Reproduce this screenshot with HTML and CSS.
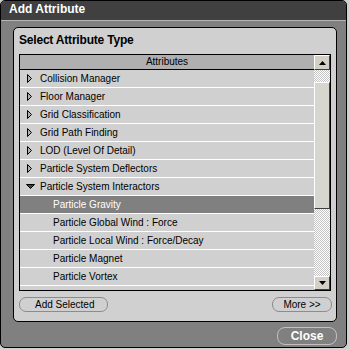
FILE: index.html
```html
<!DOCTYPE html>
<html>
<head>
<meta charset="utf-8">
<link rel="stylesheet" href="styles.css">
</head>
<body>
<div class="window">
  <div class="titlebar">Add Attribute</div>
  <div class="body">
    <div class="panel">
      <div class="heading">Select Attribute Type</div>
      <div class="listbox">
        <div class="listmain">
          <div class="listhead">Attributes</div>
          <div class="rows">
            <div class="row"><svg class="tri" width="6" height="9" viewBox="0 0 6 9"><polygon points="0.5,0.5 4.5,4.5 0.5,8.5" fill="#b0b0b0" stroke="#000"/></svg><span>Collision Manager</span></div>
            <div class="row"><svg class="tri" width="6" height="9" viewBox="0 0 6 9"><polygon points="0.5,0.5 4.5,4.5 0.5,8.5" fill="#b0b0b0" stroke="#000"/></svg><span>Floor Manager</span></div>
            <div class="row"><svg class="tri" width="6" height="9" viewBox="0 0 6 9"><polygon points="0.5,0.5 4.5,4.5 0.5,8.5" fill="#b0b0b0" stroke="#000"/></svg><span>Grid Classification</span></div>
            <div class="row"><svg class="tri" width="6" height="9" viewBox="0 0 6 9"><polygon points="0.5,0.5 4.5,4.5 0.5,8.5" fill="#b0b0b0" stroke="#000"/></svg><span>Grid Path Finding</span></div>
            <div class="row"><svg class="tri" width="6" height="9" viewBox="0 0 6 9"><polygon points="0.5,0.5 4.5,4.5 0.5,8.5" fill="#b0b0b0" stroke="#000"/></svg><span>LOD (Level Of Detail)</span></div>
            <div class="row"><svg class="tri" width="6" height="9" viewBox="0 0 6 9"><polygon points="0.5,0.5 4.5,4.5 0.5,8.5" fill="#b0b0b0" stroke="#000"/></svg><span>Particle System Deflectors</span></div>
            <div class="row open"><svg class="tridown" width="9" height="6" viewBox="0 0 9 6"><polygon points="0.5,0.5 8.5,0.5 4.5,4.5" fill="#404040" stroke="#000"/></svg><span>Particle System Interactors</span></div>
            <div class="row child selected"><span>Particle Gravity</span></div>
            <div class="row child"><span>Particle Global Wind : Force</span></div>
            <div class="row child"><span>Particle Local Wind : Force/Decay</span></div>
            <div class="row child"><span>Particle Magnet</span></div>
            <div class="row child"><span>Particle Vortex</span></div>
          </div>
        </div>
        <div class="scrollbar">
          <div class="sbtn up"><svg width="7" height="4" viewBox="0 0 7 4"><polygon points="3.5,0 7,4 0,4" fill="#000"/></svg></div>
          <div class="track"><div class="thumb"></div></div>
          <div class="sbtn down"><svg width="7" height="4" viewBox="0 0 7 4"><polygon points="0,0 7,0 3.5,4" fill="#000"/></svg></div>
        </div>
      </div>
      <div class="actions">
        <div class="pill add">Add Selected</div>
        <div class="pill more">More &gt;&gt;</div>
      </div>
    </div>
    <div class="footer">
      <div class="close">Close</div>
    </div>
  </div>
</div>
</body>
</html>
```
FILE: styles.css
```css
html, body {
  margin: 0;
  padding: 0;
  background: #d0d0d0;
}
body {
  width: 349px;
  height: 349px;
  overflow: hidden;
  font-family: "Liberation Sans", Arial, sans-serif;
}
.window {
  width: 347px;
  height: 348px;
  box-sizing: border-box;
  border: 1px solid #000;
  border-radius: 5px 5px 5px 5px;
  background: #808080;
  overflow: hidden;
  display: flex;
  flex-direction: column;
}
.titlebar {
  height: 20px;
  box-sizing: border-box;
  background: #404040;
  border-bottom: 1px solid #b4b4b4;
  color: #fff;
  font-weight: bold;
  font-size: 12px;
  line-height: 16px;
  padding: 0 0 0 8px;
  flex: none;
}
.body {
  flex: 1;
  padding: 6px 9px 0 12px;
  display: flex;
  flex-direction: column;
}
.panel {
  height: 295px;
  box-sizing: border-box;
  border: 1px solid #000;
  border-radius: 5px;
  background: #d0d0d0;
  padding: 0 5px;
  display: flex;
  flex-direction: column;
}
.heading {
  height: 26px;
  font-weight: bold;
  font-size: 12px;
  line-height: 24px;
  flex: none;
  letter-spacing: -0.2px;
}
.listbox {
  height: 237px;
  box-sizing: border-box;
  border: 1px solid #000;
  display: flex;
  flex: none;
}
.listmain {
  flex: 1;
  display: flex;
  flex-direction: column;
  overflow: hidden;
}
.listhead {
  height: 14px;
  background: #b0b0b0;
  border-bottom: 1px solid #000;
  text-align: center;
  font-size: 10px;
  line-height: 14px;
  flex: none;
}
.rows {
  flex: 1;
  overflow: hidden;
}
.row {
  height: 17px;
  border-bottom: 1px solid #fff;
  font-size: 10px;
  line-height: 17px;
  display: flex;
  align-items: center;
  padding-left: 7px;
  white-space: nowrap;
}
.row .tri {
  margin-right: 7px;
}
.row .tridown {
  margin-right: 5px;
  margin-left: -1px;
}
.row.child {
  padding-left: 33px;
}
.row.selected {
  background: #808080;
  color: #fff;
}
.scrollbar {
  width: 16px;
  display: flex;
  flex-direction: column;
  flex: none;
}
.sbtn {
  background: #d4d0c8;
  box-sizing: border-box;
  border-top: 1px solid #fff;
  border-left: 1px solid #fff;
  border-right: 1px solid #404040;
  border-bottom: 1px solid #404040;
  display: flex;
  align-items: center;
  justify-content: center;
  flex: none;
}
.sbtn.up {
  height: 15px;
}
.sbtn.down {
  height: 14px;
}
.track {
  flex: 1;
  background: repeating-conic-gradient(#ffffff 0 25%, #c4c4c4 0 50%) 0 0 / 2px 2px;
}
.thumb {
  margin-top: 12px;
  height: 127px;
  box-sizing: border-box;
  background: #d6d6ce;
  border-top: 1px solid #fff;
  border-left: 1px solid #fff;
  border-right: 1px solid #404040;
  border-bottom: 1px solid #404040;
}
.actions {
  display: flex;
  justify-content: space-between;
  margin-top: 6px;
}
.pill {
  height: 15px;
  box-sizing: border-box;
  border: 1px solid #8c8c8c;
  border-radius: 7px;
  font-size: 10px;
  line-height: 13px;
}
.pill.add {
  width: 89px;
  padding-left: 15px;
}
.pill.more {
  width: 60px;
  text-align: center;
  margin-right: -1px;
}
.footer {
  display: flex;
  justify-content: flex-end;
  padding-top: 5px;
}
.close {
  width: 60px;
  height: 18px;
  box-sizing: border-box;
  border: 1px solid #c0c0c0;
  border-radius: 8px;
  color: #fff;
  font-weight: bold;
  font-size: 12px;
  line-height: 16px;
  text-align: center;
}
```
